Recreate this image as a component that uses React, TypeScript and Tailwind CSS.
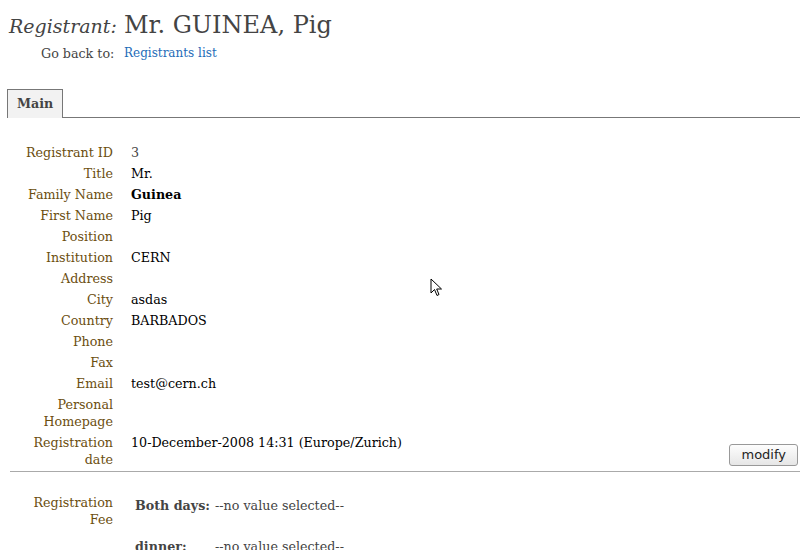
import React from 'react';

const rows: { label: React.ReactNode; value?: React.ReactNode }[] = [
  { label: 'Registrant ID', value: <span className="text-[#444]">3</span> },
  { label: 'Title', value: 'Mr.' },
  { label: 'Family Name', value: <b>Guinea</b> },
  { label: 'First Name', value: 'Pig' },
  { label: 'Position' },
  { label: 'Institution', value: 'CERN' },
  { label: 'Address' },
  { label: 'City', value: 'asdas' },
  { label: 'Country', value: 'BARBADOS' },
  { label: 'Phone' },
  { label: 'Fax' },
  { label: 'Email', value: 'test@cern.ch' },
  { label: 'Personal Homepage' },
];

const fees = [
  { name: 'Both days:', value: '--no value selected--' },
  { name: 'dinner:', value: '--no value selected--' },
];

export default function App() {
  return (
    <div className="relative h-[550px] w-[800px] overflow-hidden bg-white font-['DejaVu_Serif',serif] text-[12.7px] text-black">
      {/* Header */}
      <h1 className="flex items-baseline pl-[9px] pt-[9px] leading-[32px] text-[#444]">
        <span className="w-[115px] text-[19px] italic">Registrant:</span>
        <span className="text-[24px]">Mr. GUINEA, Pig</span>
      </h1>
      <div className="flex pl-[41px] pt-[3px] leading-[17px] text-[#444]">
        <span className="w-[83px]">Go back to:</span>
        <a href="#" className="text-[12px] text-[#1e6cb8]">Registrants list</a>
      </div>

      {/* Tabs */}
      <div className="mt-[27px] flex pl-[7px]">
        <div className="flex h-[29px] items-center border border-b-0 border-[#777] bg-[#f2f2f2] px-[9px] font-bold text-[#444]">
          Main
        </div>
        <div className="flex-1 border-b border-[#777]" />
      </div>

      {/* Main panel */}
      <div className="ml-[5px] bg-[linear-gradient(#cfcfcf,#fff_22px)_left_top/1px_100%_no-repeat,linear-gradient(#eee,#fff_26px)] pt-[24px]">
        <div className="flex flex-col">
          {rows.map((row, idx) => (
            <div key={idx} className="flex py-[2px] leading-[17px]">
              <div className="ml-[5px] w-[103px] text-right text-[#6b4e0f]">{row.label}</div>
              <div className="ml-[18px] flex-1">{row.value}</div>
            </div>
          ))}
          <div className="flex py-[2px] leading-[17px]">
            <div className="ml-[5px] w-[103px] text-right text-[#6b4e0f]">Registration date</div>
            <div className="ml-[18px] flex flex-1 justify-between pr-[2px]">
              <span>10-December-2008 14:31 (Europe/Zurich)</span>
              <button className="mb-[2px] h-[22px] self-end rounded-[3px] border border-[#999] bg-[linear-gradient(#fdfdfd,#e6e6e6)] px-[11px] font-['DejaVu_Sans',sans-serif] text-[13px] leading-[20px] text-[#222]">
                modify
              </button>
            </div>
          </div>
        </div>

        <div className="ml-[5px] mt-[1px] border-t border-[#aaa]" />

        {/* Registration fee */}
        <div className="flex pt-[22px] leading-[17px]">
          <div className="ml-[5px] w-[103px] text-right text-[#6b4e0f]">Registration Fee</div>
          <div className="ml-[22px] mt-[3px] flex flex-col gap-[24px] text-[#444]">
            {fees.map((fee, idx) => (
              <div key={idx} className="flex">
                <span className="w-[80px] font-bold">{fee.name}</span>
                <span>{fee.value}</span>
              </div>
            ))}
          </div>
        </div>
      </div>

      {/* Mouse cursor */}
      <svg className="absolute left-[430px] top-[278px]" width="13" height="20" viewBox="0 0 13 20">
        <path d="M1 1 L1 15 L4.5 11.5 L7 17.5 L9 16.5 L6.7 11 L11.5 11 Z" fill="#fff" stroke="#000" strokeWidth="1" strokeLinejoin="round" />
      </svg>
    </div>
  );
}
